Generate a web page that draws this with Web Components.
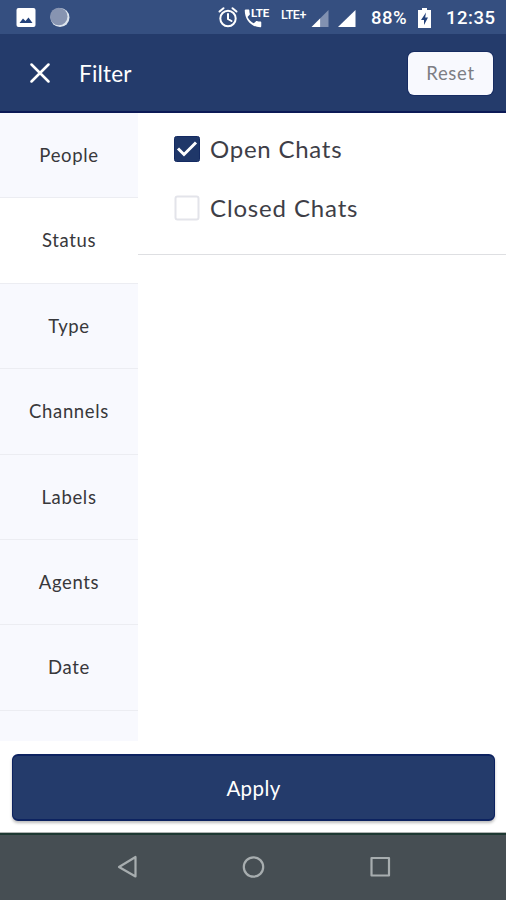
<!DOCTYPE html>
<html lang="en">
<head>
<meta charset="utf-8">
<title>Filter</title>
<style>
html,body{margin:0;height:100%;background:#fff;overflow:hidden}
body{font-family:Lato,"Liberation Sans",sans-serif}
</style>
</head>
<body>
<filter-screen></filter-screen>
<script>
const define = (name, html) => {
  const t = document.createElement('template');
  t.innerHTML = html;
  customElements.define(name, class extends HTMLElement {
    constructor() {
      super();
      this.attachShadow({mode: 'open'}).append(t.content.cloneNode(true));
    }
  });
};

define('status-bar', `
<style>
:host{display:flex;height:34px;box-sizing:border-box;background:#354f80;color:#fff;font:500 18.5px/37px Roboto,sans-serif}
svg{display:block;flex:none}
.left{flex:none;width:218px}
.pct{width:47px;padding-left:1px;box-sizing:border-box;white-space:nowrap;letter-spacing:.5px}
.time{padding-left:14px;letter-spacing:.5px;white-space:nowrap}
.net{position:relative;flex:none;width:152px;height:34px}
.net span{position:absolute;font:700 11px/12px Roboto,sans-serif;white-space:nowrap}
</style>
<svg class="left" width="218" height="34">
  <rect x="16.5" y="8" width="19" height="19" rx="2" fill="#fff"/>
  <path d="M19.500 23L23 18.500L25.500 21L28.500 17.500L32.500 23Z" fill="#24427b"/>
  <circle cx="60" cy="17.500" r="9.500" fill="#dce4ed"/><circle cx="58.800" cy="16.500" r="8.700" fill="#8794b1"/>
</svg>
<div class="net">
  <svg width="152" height="34">
    <g fill="none" stroke="#fff" stroke-width="2" stroke-linecap="round">
      <circle cx="10" cy="18.500" r="7.700"/><path d="M10 14V19L13.500 21M1.500 11.500L5.500 8.200M18.500 11.500L14.500 8.200"/>
    </g>
    <path transform="translate(26 9.500) scale(.96)" fill="#fff" d="M16.990 12.500c-1.200 0-2.400-.2-3.500-.56-.35-.1-.74-.03-1.020.24l-2.200 2.200c-2.830-1.440-5.150-3.750-6.590-6.580l2.200-2.210c.28-.27.36-.66.250-1.010C5.760 3.450 5.560 2.250 5.560 1c0-.55-.45-1-1-1H3C1 0 .8.450.8 1c0 9.390 6.800 17.500 16.190 17.500.55 0 1-.45 1-1v-4c0-.55-.45-1-1-1z"/>
    <path d="M93.500 27L102.500 18V27Z" fill="#fff"/><path d="M102.500 18L110.500 10V27H102.500Z" fill="#8191b1"/>
    <path d="M120 27L137.500 10V27Z" fill="#fff"/>
  </svg>
  <span style="left:33px;top:6.500px;font-size:11.500px;letter-spacing:-.1px">LTE</span>
  <span style="left:63px;top:8.500px;font-weight:500;font-size:12.500px;letter-spacing:-.5px">LTE+</span>
</div>
<div class="pct">88%</div>
<svg width="15" height="34">
  <path d="M5 8H10V10H14V28H1V10H5Z" fill="#fff"/><path d="M9 12.500L4 20H7V25L11 17.500H8.200Z" fill="#24427b"/>
</svg>
<div class="time">12:35</div>`);

define('app-header', `
<style>
:host{display:flex;align-items:center;height:79px;box-sizing:border-box;background:#243b6b;border-bottom:2px solid #0c1a56;padding:0 13px 0 30px;color:#fff}
svg{display:block;margin-right:29px;margin-top:1px}
.title{flex:1;font-size:22.500px;line-height:30px;letter-spacing:.2px;padding-top:2px}
button{all:unset;box-sizing:border-box;width:85px;height:43px;border-radius:6px;background:#f8f9fe;color:#7d7e84;text-align:center;font:18.500px/43px Lato,sans-serif;letter-spacing:.65px;margin-top:1px;box-shadow:0 0 0 1px #172c62}
</style>
<svg width="20" height="20"><path d="M1.500 1.500L18.500 18.500M18.500 1.500L1.500 18.500" stroke="#fff" stroke-width="2.500" stroke-linecap="round"/></svg>
<div class="title"><slot></slot></div>
<button><slot name="action"></slot></button>`);

define('filter-tab', `
<style>
:host{display:block;height:85.400px;flex:none;box-sizing:border-box;border-bottom:1px solid #ecedf2;background:#f8f9fe;color:#38383b;text-align:center;font-size:18.500px;line-height:85px;letter-spacing:.65px}
:host([active]){background:#fff}
</style><slot></slot>`);

define('check-option', `
<style>
:host{display:flex;align-items:center;height:30px;gap:10px;color:#3e3e47;font-size:24px;line-height:30px;letter-spacing:.75px;white-space:nowrap}
svg{display:block}
.on{display:none}
:host([checked]) .on{display:block}
:host([checked]) .off{display:none}
</style>
<svg class="off" width="26" height="26"><rect x="1.500" y="1.500" width="23" height="23" rx="2" fill="#fff" stroke="#e3e4ea" stroke-width="2"/></svg>
<svg class="on" width="26" height="26"><rect x=".5" y=".5" width="25" height="25" rx="2" fill="#1f3769" stroke="#142a62"/><path d="M4 12.500L10 18.500L22 6.500" fill="none" stroke="#fff" stroke-width="3"/></svg>
<span><slot></slot></span>`);

define('apply-button', `
<style>
:host{display:block;padding:13px 11px 11px 12px;height:91px;box-sizing:border-box}
button{all:unset;display:block;box-sizing:border-box;width:100%;height:67px;border:1px solid #0c2260;border-width:2px 1px;border-radius:6px;background:#243b6b;box-shadow:0 2px 3px #0004;color:#fff;text-align:center;font:20.500px/64px Lato,sans-serif;letter-spacing:.4px}
</style><button><slot></slot></button>`);

define('nav-bar', `
<style>
:host{display:block;height:68px;box-sizing:border-box;background:#464e53;border-top:1px solid #b1b5b4}
svg{display:block}
</style>
<svg width="506" height="67"><rect width="506" height="2" fill="#1d3832"/>
<g fill="none" stroke="#a7adaf" stroke-width="2.200" stroke-linejoin="round"><path d="M135.500 24V43.500L119 34Z"/><circle cx="253.500" cy="34" r="9.700"/><rect x="371.500" y="25" width="17.500" height="17.500"/></g></svg>`);

define('filter-screen', `
<style>
:host{display:flex;flex-direction:column;width:506px;height:900px;background:#fff}
.main{display:flex;height:628px}
nav{display:flex;flex-direction:column;width:138px;height:100%;overflow:hidden;background:#f8f9fe}
.opts{flex:1;height:142px;box-sizing:border-box;border-bottom:1px solid #dedfe2;padding:21px 0 0 36px;display:flex;flex-direction:column;gap:29px}
.opts check-option:last-child{letter-spacing:.85px}
</style>
<status-bar></status-bar>
<app-header>Filter<span slot="action">Reset</span></app-header>
<div class="main">
  <nav>
    <filter-tab>People</filter-tab><filter-tab active>Status</filter-tab><filter-tab>Type</filter-tab><filter-tab>Channels</filter-tab><filter-tab>Labels</filter-tab><filter-tab>Agents</filter-tab><filter-tab>Date</filter-tab>
  </nav>
  <div class="opts"><check-option checked>Open Chats</check-option><check-option>Closed Chats</check-option></div>
</div>
<apply-button>Apply</apply-button>
<nav-bar></nav-bar>`);
</script>
</body>
</html>
